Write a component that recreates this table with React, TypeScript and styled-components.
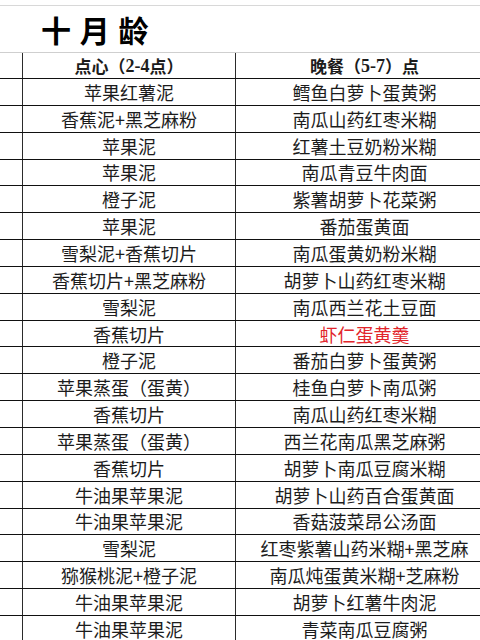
import React from "react";
import styled, { createGlobalStyle } from "styled-components";

const Global = createGlobalStyle`
  html, body { margin: 0; padding: 0; background: #fff; }
  body { font-family: "Noto Sans CJK SC", "Noto Sans", sans-serif; color: #1c1c1c; }
`;

const Page = styled.div`
  width: 480px;
  height: 640px;
  overflow: hidden;
  padding-top: 5px;
  box-sizing: border-box;
`;

const TitleRow = styled.div`
  height: 48px;
  box-sizing: border-box;
  border-top: 1px solid #d8d8d8;
  border-bottom: 1px solid #cfcfcf;
  display: flex;
  align-items: center;
  padding-left: 41px;
`;

const Title = styled.h1`
  margin: 0;
  font-size: 30px;
  font-weight: 700;
  color: #000;
  letter-spacing: 1px;
  line-height: 1;
  white-space: pre;
`;

const Row = styled.div<{ $h: number }>`
  display: grid;
  grid-template-columns: 22px 213px 258px;
  height: ${(p) => p.$h}px;
  box-sizing: border-box;
  border-bottom: 1px solid #111;
  width: 493px;
`;

const Cell = styled.div<{ $bold?: boolean; $red?: boolean }>`
  border-left: 1px solid #2b2b2b;
  display: flex;
  align-items: center;
  justify-content: center;
  font-size: ${(p) => (p.$bold ? "17px" : "18px")};
  font-weight: ${(p) => (p.$bold ? 700 : 400)};
  color: ${(p) => (p.$red ? "#e2252b" : "#1c1c1c")};
  white-space: nowrap;
  line-height: 1;
`;

const Blank = styled.div``;

const Num = styled.span`
  font-family: "Liberation Serif", serif;
  font-weight: 700;
  font-size: 18px;
`;

const rows: [string, string, boolean?][] = [
  ["苹果红薯泥", "鳕鱼白萝卜蛋黄粥"],
  ["香蕉泥+黑芝麻粉", "南瓜山药红枣米糊"],
  ["苹果泥", "红薯土豆奶粉米糊"],
  ["苹果泥", "南瓜青豆牛肉面"],
  ["橙子泥", "紫薯胡萝卜花菜粥"],
  ["苹果泥", "番茄蛋黄面"],
  ["雪梨泥+香蕉切片", "南瓜蛋黄奶粉米糊"],
  ["香蕉切片+黑芝麻粉", "胡萝卜山药红枣米糊"],
  ["雪梨泥", "南瓜西兰花土豆面"],
  ["香蕉切片", "虾仁蛋黄羹", true],
  ["橙子泥", "番茄白萝卜蛋黄粥"],
  ["苹果蒸蛋（蛋黄）", "桂鱼白萝卜南瓜粥"],
  ["香蕉切片", "南瓜山药红枣米糊"],
  ["苹果蒸蛋（蛋黄）", "西兰花南瓜黑芝麻粥"],
  ["香蕉切片", "胡萝卜南瓜豆腐米糊"],
  ["牛油果苹果泥", "胡萝卜山药百合蛋黄面"],
  ["牛油果苹果泥", "香菇菠菜昂公汤面"],
  ["雪梨泥", "红枣紫薯山药米糊+黑芝麻"],
  ["猕猴桃泥+橙子泥", "南瓜炖蛋黄米糊+芝麻粉"],
  ["牛油果苹果泥", "胡萝卜红薯牛肉泥"],
  ["牛油果苹果泥", "青菜南瓜豆腐粥"],
];

export default function App() {
  return (
    <>
      <Global />
      <Page>
        <TitleRow>
          <Title>{"十 月 龄"}</Title>
        </TitleRow>
        <Row $h={26}>
          <Blank />
          <Cell $bold>
            点心（<Num>2-4</Num>点）
          </Cell>
          <Cell $bold>
            晚餐（<Num>5-7</Num>）点
          </Cell>
        </Row>
        {rows.map(([a, b, red], i) => (
          <Row key={i} $h={26.85}>
            <Blank />
            <Cell>{a}</Cell>
            <Cell $red={red}>{b}</Cell>
          </Row>
        ))}
      </Page>
    </>
  );
}
